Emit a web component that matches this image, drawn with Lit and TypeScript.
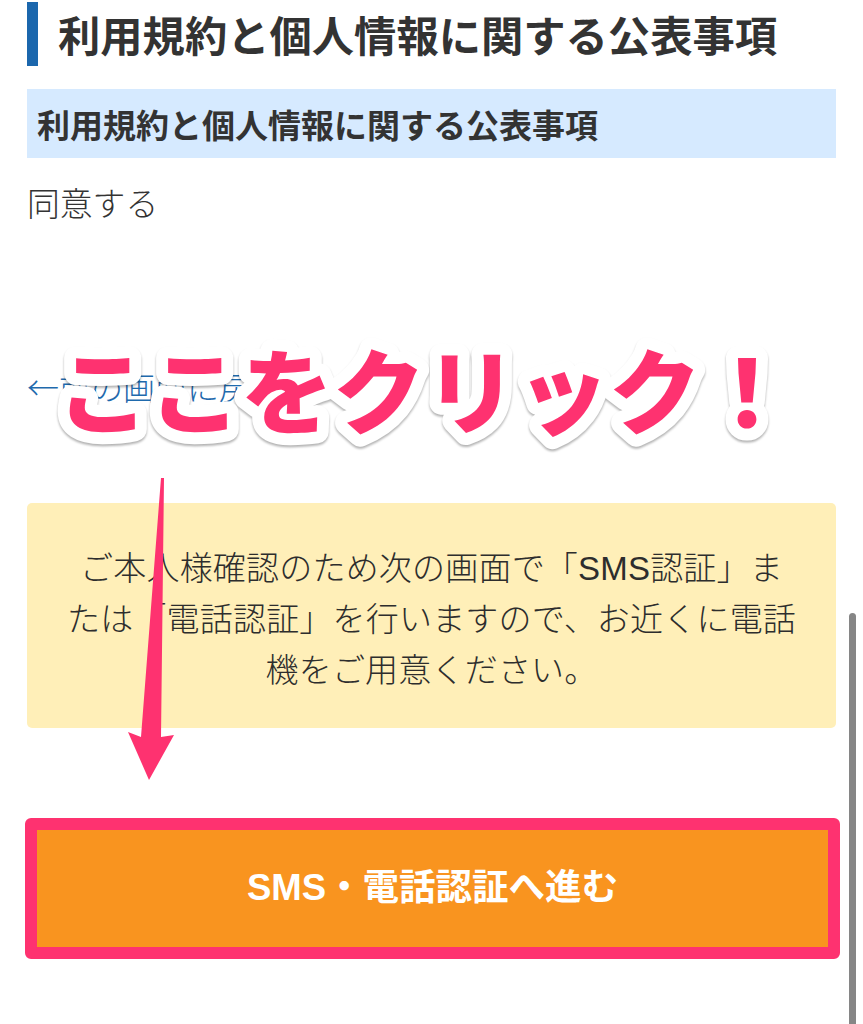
import { LitElement, html, css, svg } from "lit";
import { customElement } from "lit/decorators.js";

@customElement("app-root")
export class AppRoot extends LitElement {
  static styles = css`
    :host {
      display: block;
      position: relative;
      width: 863px;
      height: 1024px;
      overflow: hidden;
      background: #fff;
      font-family: "Liberation Sans", "Noto Sans CJK JP", sans-serif;
      color: #333;
    }
    .page {
      display: flex;
      flex-direction: column;
      padding: 2px 27px 0;
    }
    .title {
      margin: 0;
      height: 64px;
      box-sizing: border-box;
      border-left: 11px solid #1b67ad;
      padding: 0 0 2px 20px;
      display: flex;
      align-items: center;
      font-size: 42.3px;
      font-weight: 700;
      color: #333;
      white-space: nowrap;
    }
    .sub {
      margin: 23px 0 0;
      height: 69px;
      width: 809px;
      box-sizing: border-box;
      background: #d6eaff;
      padding-left: 10px;
      display: flex;
      align-items: center;
      font-size: 33px;
      font-weight: 700;
      color: #333;
      white-space: nowrap;
    }
    .agree {
      margin: 22px 0 0;
      font-size: 32.8px;
      line-height: 50px;
      font-weight: 300;
    }
    .back {
      margin: 131px 0 0;
      font-family: "Noto Sans CJK JP", sans-serif;
      font-size: 32px;
      line-height: 50px;
      color: #1f6aad;
      font-weight: 300;
      text-decoration: none;
    }
    .note {
      margin: 92px 0 0;
      width: 809px;
      height: 225px;
      box-sizing: border-box;
      background: #ffefb8;
      border-radius: 5px;
      padding: 40px 20px 0;
      text-align: center;
      font-size: 33px;
      letter-spacing: 0.2px;
      line-height: 51px;
      font-weight: 300;
      color: #2d2d2d;
    }
    .cta {
      margin: 90px 0 0 -2px;
      width: 815px;
      height: 141px;
      box-sizing: border-box;
      border: 12px solid #fe3270;
      border-radius: 6px;
      background: #f9941f;
      background-clip: padding-box;
      padding-bottom: 8px;
      display: flex;
      align-items: center;
      justify-content: center;
      font-size: 36.5px;
      font-weight: 700;
      color: #fff;
    }
    .scrollbar {
      position: absolute;
      left: 849px;
      top: 613px;
      width: 7px;
      height: 411px;
      background: #868686;
      border-radius: 4px 4px 0 0;
    }
    .arrow {
      position: absolute;
      left: 0;
      top: 0;
      pointer-events: none;
    }
    .click {
      font-family: "Noto Sans CJK JP", sans-serif;
      font-weight: 900;
      font-size: 92px;
      paint-order: stroke fill;
      stroke-linejoin: round;
    }
    .halo {
      fill: #fff;
      stroke: #fff;
      stroke-width: 24px;
      filter: drop-shadow(0 2px 1px rgba(0, 0, 0, 0.3));
    }
    .face {
      fill: #fe3270;
    }
  `;

  render() {
    const label = "ここをクリック！";
    return html`
      <div class="page">
        <h1 class="title">利用規約と個人情報に関する公表事項</h1>
        <h2 class="sub">利用規約と個人情報に関する公表事項</h2>
        <div class="agree">同意する</div>
        <a class="back">←前の画面に戻る</a>
        <div class="note">
          ご本人様確認のため次の画面で「SMS認証」ま<br />たは「電話認証」を行いますので、お近くに電話<br />機をご用意ください。
        </div>
        <div class="cta">SMS・電話認証へ進む</div>
      </div>
      <div class="scrollbar"></div>
      <svg class="arrow" width="863" height="1024" viewBox="0 0 863 1024">
        ${svg`
          <text class="click halo" x="57" y="427">${label}</text>
          <text class="click face" x="57" y="427">${label}</text>
          <polygon fill="#fe3270" points="161,478 164,478 161,737 174,735 149,780 128,732 141,737" />
        `}
      </svg>
    `;
  }
}
